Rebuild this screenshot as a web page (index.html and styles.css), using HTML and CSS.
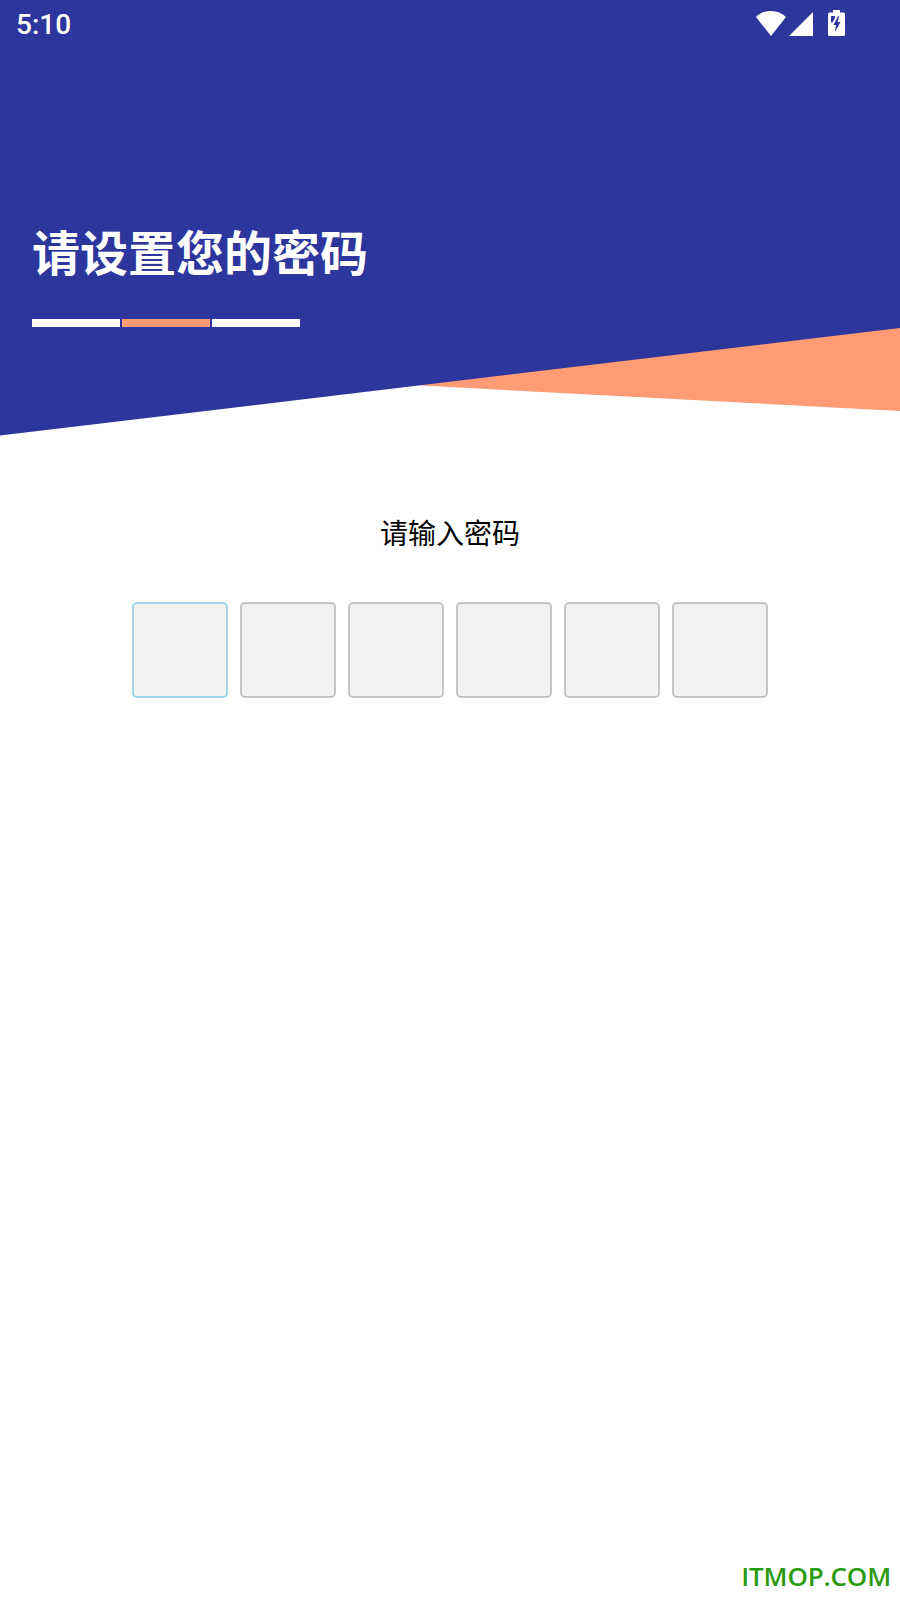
FILE: index.html
```html
<!DOCTYPE html>
<html lang="zh-CN">
<head>
    <meta charset="UTF-8">
    <meta name="viewport" content="width=device-width, initial-scale=1.0">
    <title>设置密码</title>
    <link rel="stylesheet" href="styles.css">
</head>
<body>
    <header class="hero">
        <!-- slanted banner: blue block with the orange wedge under its right edge -->
        <svg class="hero-shape" width="900" height="436" viewBox="0 0 900 436">
            <polygon fill="#ff9c76" points="421,385.500 900,411 900,300 421,300"/>
            <polygon fill="#2d369d" points="0,0 900,0 900,328 0,435.500"/>
        </svg>

        <div class="status-bar">
            <span class="clock">5:10</span>
            <div class="status-icons">
                <svg class="icon-wifi" width="30" height="25" viewBox="0 0 30 25">
                    <path fill="#fff" d="M15 0C9 0 4 2 0 6L15 25 30 6C26 2 21 0 15 0Z"/>
                </svg>
                <svg class="icon-signal" width="24" height="24" viewBox="0 0 24 24">
                    <polygon fill="#fff" points="24,0 24,24 0,24"/>
                </svg>
                <svg class="icon-battery" width="17" height="26" viewBox="0 0 17 26">
                    <path fill="#fff" fill-rule="evenodd" d="M5 0H12V2.500H15.500Q17 2.500 17 4V24.500Q17 26 15.500 26H1.500Q0 26 0 24.500V4Q0 2.500 1.500 2.500H5ZM3 6H7V8L4.500 12.500H3ZM10 6 5.500 15H8L7 22 12.500 12H9.500L11 6Z"/>
                </svg>
            </div>
        </div>

        <div class="hero-text">
            <h1 class="hero-title">请设置您的密码</h1>
            <div class="steps">
                <span class="step"></span>
                <span class="step step-active"></span>
                <span class="step"></span>
            </div>
        </div>
    </header>

    <main class="password-form">
        <p class="prompt">请输入密码</p>
        <div class="code-boxes">
            <div class="code-box code-box-focus"></div>
            <div class="code-box"></div>
            <div class="code-box"></div>
            <div class="code-box"></div>
            <div class="code-box"></div>
            <div class="code-box"></div>
        </div>
    </main>

    <div class="watermark">ITMOP.COM</div>
</body>
</html>
```

FILE: styles.css
```css
* {
    margin: 0;
    padding: 0;
    box-sizing: border-box;
}

body {
    position: relative;
    width: 900px;
    height: 1600px;
    overflow: hidden;
    background-color: #fff;
    font-family: "Noto Sans CJK SC", "Noto Sans", sans-serif;
}

.hero {
    position: relative;
    height: 436px;
}

.hero-shape {
    position: absolute;
    top: 0;
    left: 0;
}

.status-bar {
    position: relative;
    display: flex;
    justify-content: space-between;
    align-items: center;
    height: 50px;
    padding: 0 55px 0 16px;
    color: #fff;
}

.clock {
    font-family: Roboto, sans-serif;
    font-size: 28px;
    font-weight: 500;
    line-height: 50px;
}

.status-icons {
    display: flex;
    align-items: flex-end;
    height: 26px;
    margin-bottom: 4px;
}

.icon-signal {
    margin-left: 3px;
}

.icon-battery {
    margin-left: 15px;
}

.hero-text {
    position: relative;
    padding: 166px 0 0 32px;
}

.hero-title {
    font-size: 48px;
    font-weight: 700;
    line-height: 68px;
    color: #fff;
}

.steps {
    display: flex;
    gap: 2px;
    margin-top: 35px;
}

.step {
    width: 88px;
    height: 8px;
    background-color: #fff;
}

.step-active {
    background-color: #ff9c76;
}

.password-form {
    display: flex;
    flex-direction: column;
    align-items: center;
    padding-top: 75px;
}

.prompt {
    font-size: 28px;
    line-height: 42px;
    color: #000;
}

.code-boxes {
    display: flex;
    gap: 12px;
    margin-top: 49px;
}

.code-box {
    width: 96px;
    height: 96px;
    background-color: #f2f2f2;
    border: 2px solid #c5c5c9;
    border-radius: 5px;
}

.code-box-focus {
    border-color: #9fd6ec;
}

.watermark {
    position: absolute;
    right: 9px;
    bottom: 7px;
    font-family: "Open Sans", sans-serif;
    font-size: 26px;
    font-weight: 600;
    letter-spacing: -0.15px;
    line-height: 34px;
    color: #2a9a10;
}
```
